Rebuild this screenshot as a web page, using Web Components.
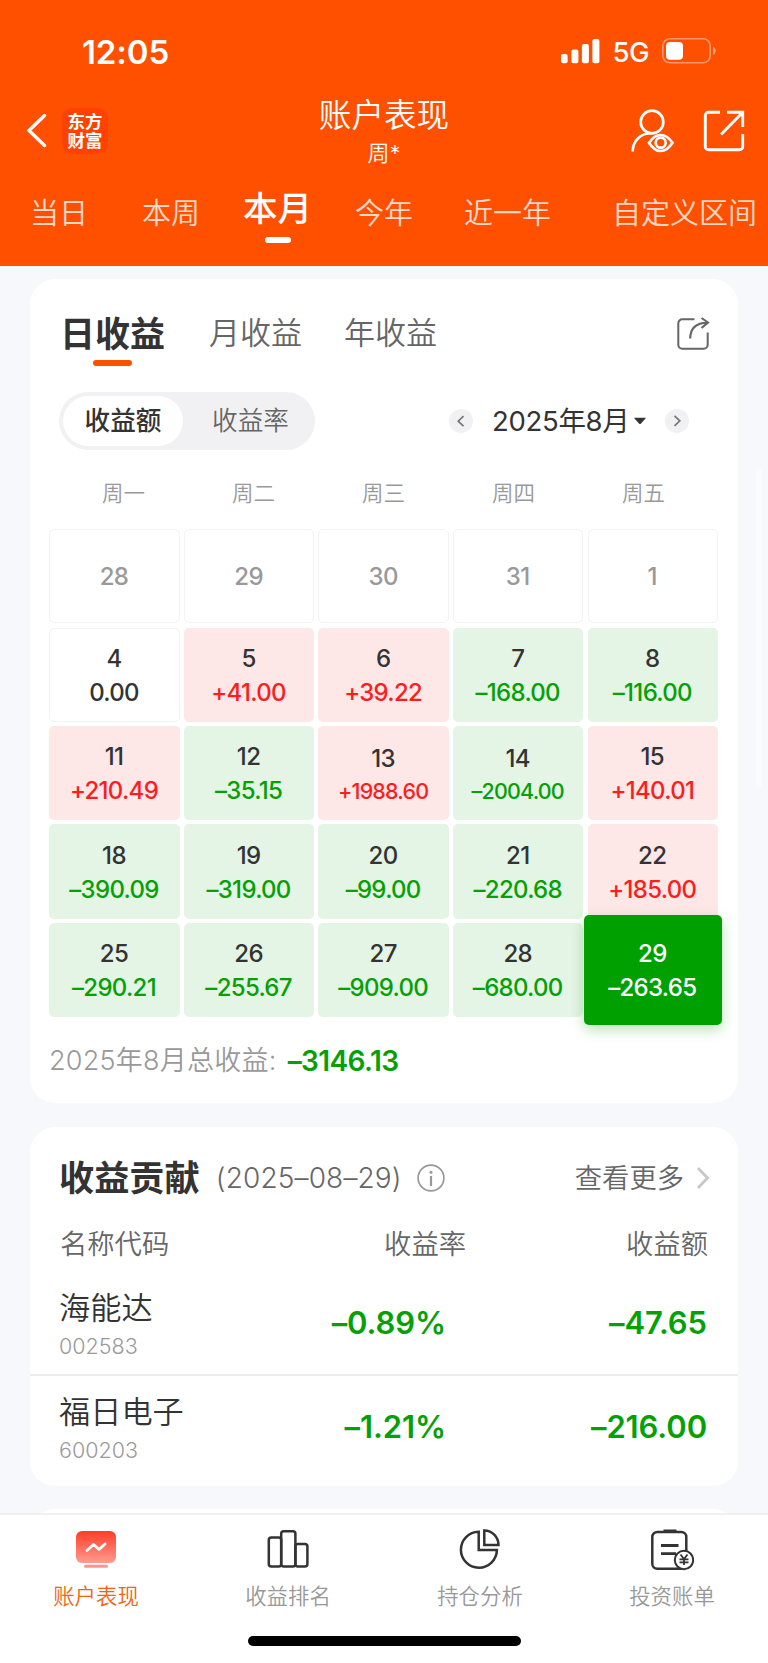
<!DOCTYPE html>
<html lang="zh-CN">
<head>
<meta charset="utf-8">
<title>账户表现</title>
<style>
html,body{margin:0;padding:0}
body{width:768px;height:1663px;overflow:hidden;background:#f7f8fb;color:#333;font-family:Inter,"Noto Sans CJK SC",sans-serif;font-size:28px}
</style>
</head>
<body>
<account-page></account-page>
<script>
function define(name, html, setup) {
  customElements.define(name, class extends HTMLElement {
    connectedCallback() {
      if (this.shadowRoot) return;
      const root = this.attachShadow({ mode: 'open' });
      root.innerHTML = typeof html === 'function' ? html(this) : html;
      if (setup) setup(this, root);
    }
  });
}

const icons = {
  signal: [39, 25, '<g fill="#fff"><rect y="15" width="6.6" height="9.3" rx="2"/><rect x="10.4" y="10.4" width="7" height="13.9" rx="2"/><rect x="20.9" y="5" width="7" height="19.3" rx="2"/><rect x="31.4" width="7" height="24.3" rx="2"/></g>'],
  battery: [55, 26, '<rect x=".8" y=".8" width="47.4" height="24" rx="7" fill="none" stroke="#fff" stroke-opacity=".42" stroke-width="1.6"/><rect x="4" y="4" width="17" height="17.8" rx="4" fill="#fff"/><path d="M51 8.8c3.6 1.5 3.6 6.700 0 8.200z" fill="#fff" fill-opacity=".45"/>'],
  back: [20, 36, '<path d="M17.500 2.500 2 17.500l15.500 15" fill="none" stroke="#fff" stroke-width="3.400" stroke-linecap="round" stroke-linejoin="round"/>'],
  userEye: [44, 44, '<g fill="none" stroke="#fff" stroke-width="2.700"><circle cx="22" cy="13" r="11.300"/><path d="M2.600 42.500C3 31.500 10.500 24.300 21.500 24"/><path d="M19 33.700Q24.300 26 30.700 26t11.800 7.700Q37.200 42 30.700 42T19 33.700Z"/><circle cx="30.700" cy="33.700" r="5"/></g>'],
  shareBox: [42, 42, '<path d="M17 2.300H5.300a3 3 0 0 0-3 3v31.400a3 3 0 0 0 3 3h31.400a3 3 0 0 0 3-3V24M24 2.300h15.700V17M39.500 2.500 18 24.500" fill="none" stroke="#fff" stroke-width="2.900"/>'],
  export: [34, 34, '<path d="M18.500 2.300H6.300a4 4 0 0 0-4 4v21.400a4 4 0 0 0 4 4h21.400a4 4 0 0 0 4-4V15.500" fill="none" stroke="#666" stroke-width="2"/><path d="M14.200 21.500C14.200 12 19 6 31.500 5.600M25.500 1l6.500 4.500-6.500 5.500" fill="none" stroke="#666" stroke-width="2.100"/>'],
  prev: [24, 24, '<circle cx="12" cy="12" r="12" fill="#f1f1f3"/><path d="m14.500 7.200-5.300 5 5.300 5" fill="none" stroke="#777" stroke-width="1.700"/>'],
  next: [24, 24, '<circle cx="12" cy="12" r="12" fill="#f1f1f3"/><path d="m9.500 6.800 5.300 5-5.300 5" fill="none" stroke="#777" stroke-width="1.700"/>'],
  caret: [12, 8, '<path d="M.5.8h11v.8L7 6.400q-1 1-2 0L.5 1.600z" fill="#333"/>'],
  info: [28, 28, '<circle cx="14" cy="14" r="12.900" fill="none" stroke="#999" stroke-width="1.700"/><path d="M14 12v10" stroke="#999" stroke-width="2.200"/><circle cx="14" cy="8.300" r="1.500" fill="#999"/>'],
  more: [14, 22, '<path d="m2 1 9.500 10L2 21" fill="none" stroke="#c8c8c8" stroke-width="2.900"/>'],
  perf: [44, 44, '<defs><linearGradient id="g" x1="0" y1="0" x2="0" y2="1"><stop stop-color="#ff3d28"/><stop offset="1" stop-color="#ff9c8e"/></linearGradient></defs><rect x="2" y="3" width="40" height="32" rx="6" fill="url(#g)"/><rect x="10" y="36.800" width="24" height="3" rx="1.500" fill="#ff9688"/><path d="m13 22.500 6.500-6 5.500 5 6-5.500" fill="none" stroke="#fff" stroke-width="2.800" stroke-linecap="round" stroke-linejoin="round"/>'],
  rank: [44, 44, '<g fill="none" stroke="#333" stroke-width="2.500"><rect x="2.800" y="9.600" width="12.400" height="29" rx="2.500"/><rect x="15.200" y="3.300" width="14.200" height="35.300" rx="2.500"/><rect x="29.400" y="15.900" width="12" height="22.700" rx="2.500"/></g>'],
  pie: [44, 44, '<g fill="none" stroke="#333" stroke-width="2.500"><path d="M20.700 3.700A18 18 0 1 0 38.900 22H20.700Z"/><path d="M26.300 2.400V17h14.200C40.500 9.300 34.500 2.400 26.300 2.400Z"/></g>'],
  bill: [44, 44, '<g fill="none" stroke="#333" stroke-width="2.500"><rect x="2.300" y="4" width="34" height="36.800" rx="5"/><path d="M13.500 3h13M11 17.500h17.500M11 25.600h15" stroke-width="2.800"/><circle cx="34" cy="32" r="9.200" fill="#fff" stroke-width="2"/><path d="m30.500 26.500 3.500 4.500 3.500-4.500M34 31v6M29.500 31.300h9M29.500 34.300h9" stroke-width="1.800"/></g>']
};
define('ui-icon', el => {
  const [w, h, body] = icons[el.getAttribute('name')];
  return `<style>:host{display:block;flex:none;width:${w}px;height:${h}px}svg{display:block}</style><svg width="${w}" height="${h}" viewBox="0 0 ${w} ${h}">${body}</svg>`;
});

define('status-bar', `<style>
:host{display:flex;align-items:center;height:88px;padding:7px 51px 0 82px;color:#fff}
b{font-size:33px;font-weight:600;line-height:40px;margin:1px auto 0 0;letter-spacing:-.1px}
span{font-size:27.500px;font-weight:450;line-height:34px;margin:2px 13px 0 12px;letter-spacing:-.5px}
</style><b>12:05</b><ui-icon name="signal"></ui-icon><span>5G</span><ui-icon name="battery"></ui-icon>`);

define('nav-bar', `<style>
:host{display:grid;grid-template-columns:1fr auto 1fr;grid-template-rows:72px;align-items:center;height:72px;color:#fff}
.l{display:flex;align-items:center;padding-left:27px;gap:15px}
.logo{width:46px;height:46px;border-radius:10px;background:#ff4200;font-size:17.500px;line-height:19px;font-weight:700;text-align:center;display:grid;align-content:center}
.c{text-align:center;font-weight:350;margin-top:6px}
.t{font-size:32.600px;line-height:37px}.s{font-size:22px;line-height:38px}
.r{display:flex;align-items:center;justify-content:flex-end;gap:29px;padding-right:23px}
</style><div class="l"><ui-icon name="back"></ui-icon><div class="logo"><div>东方</div><div>财富</div></div></div>
<div class="c"><div class="t">账户表现</div><div class="s">周*</div></div>
<div class="r"><ui-icon name="userEye"></ui-icon><ui-icon name="shareBox"></ui-icon></div>`);

define('period-tab', `<style>
:host{display:block;flex:none;font-size:29px;line-height:40px;font-weight:350;color:rgba(255,255,255,.8);padding-top:27px}
:host([active]){font-size:34.500px;font-weight:500;color:#fff;padding-top:22px}
i{display:none}
:host([active]) i{display:block;width:26px;height:6px;border-radius:3px;background:#fff;margin:8px auto 0}
</style><slot></slot><i></i>`);

define('app-header', `<style>
:host{display:block;height:266px;background:#ff5000}
.tabs{display:flex;height:99px}
</style><status-bar></status-bar><nav-bar></nav-bar><div class="tabs">
<period-tab style="margin-left:30px">当日</period-tab><period-tab style="margin-left:54px">本周</period-tab><period-tab active style="margin-left:43px">本月</period-tab><period-tab style="margin-left:43px">今年</period-tab><period-tab style="margin-left:51px">近一年</period-tab><period-tab style="margin-left:61px">自定义区间</period-tab></div>`);

define('ui-card', `<style>:host{display:block;background:#fff;border-radius:25px;box-sizing:border-box;flex:none}</style><slot></slot>`);

define('day-cell', el => {
  const v = el.getAttribute('value');
  return `<style>
:host{display:flex;flex-direction:column;justify-content:center;align-items:center;box-sizing:border-box;border-radius:5px;font-size:24px;font-weight:500;line-height:34px;color:#333;padding:2px 1px 0 0;letter-spacing:-.6px}
:host([tone=none]){border:1px solid #f2f3f5}
:host([tone=out]){border:1px solid #f2f3f5;color:#999}
:host([tone=up]){background:#fde7e7;--amt:#fa1e1e}
:host([tone=down]){background:#e4f4e5;--amt:#05a005}
:host([selected]){background:#00a000;color:#fff;--amt:#fff;margin:-8px -4px;box-shadow:0 5px 14px rgba(0,160,0,.28);position:relative}
.v{color:var(--amt,#333);letter-spacing:-.7px}
:host([small]) .v{font-size:21.500px;line-height:30px;letter-spacing:-.8px}
</style><div>${el.getAttribute('day')}</div>${v ? `<div class="v">${v}</div>` : ''}`;
});

const days = [
  ['28'], ['29'], ['30'], ['31'], ['1'],
  ['4', '0.00'], ['5', '+41.00'], ['6', '+39.22'], ['7', '–168.00'], ['8', '–116.00'],
  ['11', '+210.49'], ['12', '–35.15'], ['13', '+1988.60'], ['14', '–2004.00'], ['15', '+140.01'],
  ['18', '–390.09'], ['19', '–319.00'], ['20', '–99.00'], ['21', '–220.68'], ['22', '+185.00'],
  ['25', '–290.21'], ['26', '–255.67'], ['27', '–909.00'], ['28', '–680.00'], ['29', '–263.65']
];
define('profit-calendar', () => `<style>
:host{display:block}
.w{display:grid;grid-template-columns:repeat(5,130px);margin-left:28.500px;font-size:21.500px;line-height:30px;text-align:center;color:#999;font-weight:350}
.g{display:grid;grid-template-columns:repeat(5,130.400px);grid-template-rows:repeat(5,94.200px);gap:4.200px;margin:21.300px 0 0 19.300px}
</style><div class="w">${['一', '二', '三', '四', '五'].map(d => `<div>周${d}</div>`).join('')}</div>
<div class="g">${days.map(([d, v = ''], i) => {
  const tone = !v ? 'out' : v[0] === '+' ? 'up' : v[0] === '–' ? 'down' : 'none';
  return `<day-cell day="${d}" value="${v}" tone="${tone}"${v.length > 7 ? ' small' : ''}${i === 24 ? ' selected' : ''}></day-cell>`;
}).join('')}</div>`);

define('profit-panel', `<style>
.tabs{display:flex;height:113px;box-sizing:border-box;padding:32px 28px 0 30px;align-items:flex-start;font-weight:350;color:#666;font-size:31px;line-height:44px}
.on{font-size:35px;line-height:46px;font-weight:700;color:#333}
.on i{display:block;width:39px;height:6px;border-radius:3px;background:#ff5000;margin:3px auto 0}
.tabs ui-icon{margin:6px 0 0 auto}
.bar{display:flex;height:58px;align-items:center;padding-left:29px}
.seg{display:flex;width:256px;height:58px;box-sizing:border-box;padding:4px;border-radius:29px;background:#f1f1f4;font-size:25.600px;line-height:50px;text-align:center;color:#666;font-weight:350}
.seg span{width:135px;flex:none;margin-right:-7px}.seg .a{width:120px;margin:0;border-radius:25px;background:#fff;color:#333;font-weight:500}
.m{font-size:27.500px;line-height:40px;margin:0 9px 0 19px;width:133px;white-space:nowrap;letter-spacing:-.3px}
.sum{display:flex;font-size:27px;line-height:36px;margin:26px 0 0 19px;color:#999;font-weight:350;letter-spacing:.25px}
.sum b{font-weight:600;color:#05a005;margin-left:11px;font-size:28px;letter-spacing:-.6px}
</style><div class="tabs"><div class="on">日收益<i></i></div><div style="margin-left:44px">月收益</div><div style="margin-left:42px">年收益</div><ui-icon name="export"></ui-icon></div>
<div class="bar"><div class="seg"><span class="a">收益额</span><span>收益率</span></div><ui-icon name="prev" style="margin-left:134px"></ui-icon><div class="m">2025年8月</div><ui-icon name="caret"></ui-icon><ui-icon name="next" style="margin-left:19px"></ui-icon></div>
<profit-calendar style="margin-top:28px"></profit-calendar>
<div class="sum"><span>2025年8月总收益:</span><b>–3146.13</b></div>`);

define('stock-row', el => `<style>
:host{display:grid;grid-template-columns:200px 186px 261px;padding-left:30px;height:103px;box-sizing:border-box}
.n{font-size:31.200px;line-height:40px;font-weight:350;color:#333;padding-top:17px;margin-left:-1px}
.c{font-size:21.500px;line-height:26px;color:#999;margin:5px 0 0 -1px;font-weight:350}
.v{font-size:31px;font-weight:600;line-height:40px;color:#05a005;text-align:right;padding-top:32px;white-space:nowrap;letter-spacing:-.1px}
</style><div><div class="n"><slot></slot></div><div class="c">${el.getAttribute('code')}</div></div><div class="v">${el.getAttribute('rate')}</div><div class="v">${el.getAttribute('amount')}</div>`);

define('contribution-panel', `<style>
.h{display:flex;align-items:center;height:102px;padding:0 28px 0 29px;color:#666}
.h b{font-size:35.200px;color:#333;font-weight:700;line-height:50px}
.d{font-size:28px;margin:0 15px 0 16px;white-space:nowrap;font-weight:350;letter-spacing:.15px}
.m{font-size:27.300px;line-height:36px;margin:1px 12px 0 auto;font-weight:350}
.t{display:grid;grid-template-columns:200px 206px 242px;padding-left:30px;font-size:27.300px;line-height:36px;font-weight:350;color:#666;margin:-2px 0 8px}
.t div+div{text-align:right}
hr{border:0;height:1.500px;background:#ececee;margin:0 0 -1px}
</style><div class="h"><b>收益贡献</b><span class="d">(2025–08–29)</span><ui-icon name="info"></ui-icon><span class="m">查看更多</span><ui-icon name="more"></ui-icon></div>
<div class="t"><div>名称代码</div><div>收益率</div><div>收益额</div></div>
<stock-row code="002583" rate="–0.89%" amount="–47.65">海能达</stock-row><hr>
<stock-row code="600203" rate="–1.21%" amount="–216.00">福日电子</stock-row>`);

define('tab-item', el => `<style>
:host{display:flex;flex-direction:column;align-items:center;padding-top:13px;font-size:21.400px;line-height:30px;color:#999;font-weight:350}
:host([active]){color:#f26411}
div{margin-top:9px}
</style><ui-icon name="${el.getAttribute('icon')}"></ui-icon><div><slot></slot></div>`);

define('tab-bar', `<style>
:host{display:block;height:150px;box-sizing:border-box;background:#fff;border-top:2px solid #f0f0f0;position:absolute;left:0;right:0;bottom:0}
.g{display:grid;grid-template-columns:repeat(4,1fr);height:121px}
i{display:block;width:273px;height:10px;border-radius:5px;background:#000;margin:0 auto}
</style><div class="g"><tab-item icon="perf" active>账户表现</tab-item><tab-item icon="rank">收益排名</tab-item><tab-item icon="pie">持仓分析</tab-item><tab-item icon="bill">投资账单</tab-item></div><i></i>`);

define('account-page', `<style>
:host{display:block;width:768px;height:1663px;position:relative;overflow:hidden}
main{display:flex;flex-direction:column;padding:13px 30px 0;gap:24px}
.thumb{position:absolute;left:756px;top:468px;width:6px;height:320px;border-radius:3px;background:#fbfbfd}
</style><app-header></app-header><main>
<ui-card style="height:824px"><profit-panel></profit-panel></ui-card>
<ui-card style="height:359px"><contribution-panel></contribution-panel></ui-card>
<ui-card style="height:120px;margin-top:-1px"></ui-card></main>
<div class="thumb"></div><tab-bar></tab-bar>`);
</script>
</body>
</html>
